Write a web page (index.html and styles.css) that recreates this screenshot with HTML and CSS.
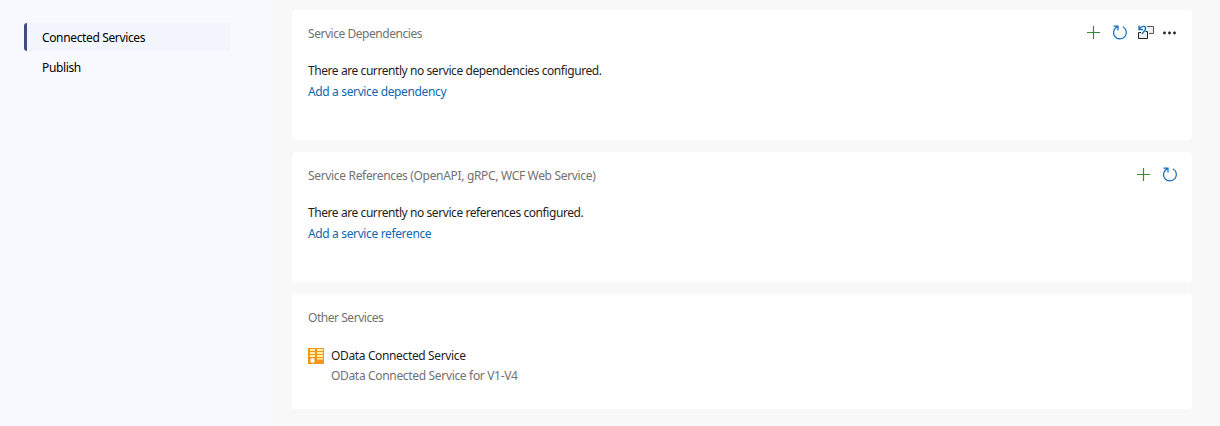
FILE: index.html
```
<!DOCTYPE html>
<html lang="en">
<head>
<meta charset="utf-8">
<title>Connected Services</title>
<link rel="stylesheet" href="styles.css">
</head>
<body>
<svg class="defs" width="0" height="0">
  <symbol id="plus" viewBox="0 0 16 16"><path d="M7.5 2v13M1 8.5h13" fill="none" stroke="#388a34" stroke-width="1.2"/></symbol>
  <symbol id="refresh" viewBox="0 0 16 16"><path d="M1.500 2H6V6.500M5.600 2.600A6.400 6.400 0 1 0 10.800 2.800" fill="none" stroke="#1b6fb5" stroke-width="1.250"/></symbol>
</svg>
<div class="app">
  <nav class="sidebar">
    <a class="nav-item active">Connected Services</a>
    <a class="nav-item">Publish</a>
  </nav>
  <main class="content">
    <section class="card">
      <header class="card-header">
        <h2 class="title short">Service Dependencies</h2>
        <div class="actions">
          <svg class="icon"><use href="#plus"/></svg>
          <svg class="icon"><use href="#refresh"/></svg>
          <svg class="icon" viewBox="0 0 16 16">
            <path d="M9 2.500h6.500v7H11" fill="#f0f0f0" stroke="#555"/>
            <path d="M3 8.500H.5v6h9v-7H7.500" fill="#eee" stroke="#222"/>
            <path d="M1 1.500v4h4M1.300 5C3 2 7.300 1.200 7.700 4.300c.2 1.900-2.200 3.500-3.900 5.500" fill="none" stroke="#1b6fb5" stroke-width="1.400"/>
          </svg>
          <svg class="icon more" viewBox="0 0 16 16"><g fill="#212121"><circle cx="2.500" cy="9" r="1.400"/><circle cx="7.500" cy="9" r="1.400"/><circle cx="12.500" cy="9" r="1.400"/></g></svg>
        </div>
      </header>
      <p class="message">There are currently no service dependencies configured.</p>
      <a class="link">Add a service dependency</a>
    </section>
    <section class="card">
      <header class="card-header">
        <h2 class="title">Service References (OpenAPI, gRPC, WCF Web Service)</h2>
        <div class="actions">
          <svg class="icon"><use href="#plus"/></svg>
          <svg class="icon"><use href="#refresh"/></svg>
        </div>
      </header>
      <p class="message">There are currently no service references configured.</p>
      <a class="link">Add a service reference</a>
    </section>
    <section class="card other">
      <header class="card-header"><h2 class="title short">Other Services</h2></header>
      <div class="service">
        <svg class="service-icon" viewBox="0 0 16 16">
          <path fill="#f7941d" d="M0 0h16v16H0z"/>
          <path fill="#fff0a8" d="M2 1h5v2H2zM9 1h6v2H9zM2 4h5v2H2zM9 4h6v2H9zM2 7h5v2H2zM9 7h6v2H9zM9 10h6v1.500H9z"/>
          <path fill="#f7941d" d="M1 9h7v6H1z"/>
          <path fill="#fff" d="M3.500 10h2v1h1v3h-1v1h-2v-1h-1v-3h1z"/>
        </svg>
        <div>
          <p class="service-name">OData Connected Service</p>
          <p class="service-detail">OData Connected Service for V1-V4</p>
        </div>
      </div>
    </section>
  </main>
</div>
</body>
</html>
```
FILE: styles.css
```
* { box-sizing: border-box; }
body { margin: 0; background: #f8f8f8; color: #1e1e1e; font: 12px/20px "Noto Sans", "Open Sans", sans-serif; letter-spacing: -0.36px; }
h2, p { margin: 0; font-size: 12px; font-weight: 400; white-space: nowrap; }
.defs { display: none; }
.app { display: flex; height: 426px; }
.sidebar { width: 267px; padding: 23px 0 0 24px; background: #f8f9ff; }
.nav-item { display: block; width: 206px; height: 28px; margin-bottom: 2px; padding: 5px 0 3px 18px; border-radius: 3px; color: #000; }
.nav-item.active { padding-left: 15px; border-left: 3px solid #424c80; background: #f2f5fc; }
.content { display: flex; flex: 1; flex-direction: column; gap: 12px; padding: 10px 28px 17px 25px; }
.card { height: 130px; padding: 14px 14px 0 16px; border-radius: 4px; background: #fff; }
.card.other { height: 115px; }
.card-header { display: flex; justify-content: space-between; height: 37px; }
.title { color: #717171; letter-spacing: -0.33px; }
.title.short { letter-spacing: -0.46px; }
.actions { display: flex; gap: 10px; }
.icon { width: 16px; height: 16px; }
.icon.more { margin-left: -2px; }
.message { height: 21px; letter-spacing: -0.425px; }
.link { display: block; width: max-content; color: #1067b0; }
.service { display: flex; gap: 7px; padding-top: 1px; }
.service-icon { width: 16px; height: 16px; margin-top: 2px; }
.service-detail { color: #717171; letter-spacing: -0.33px; }
```
